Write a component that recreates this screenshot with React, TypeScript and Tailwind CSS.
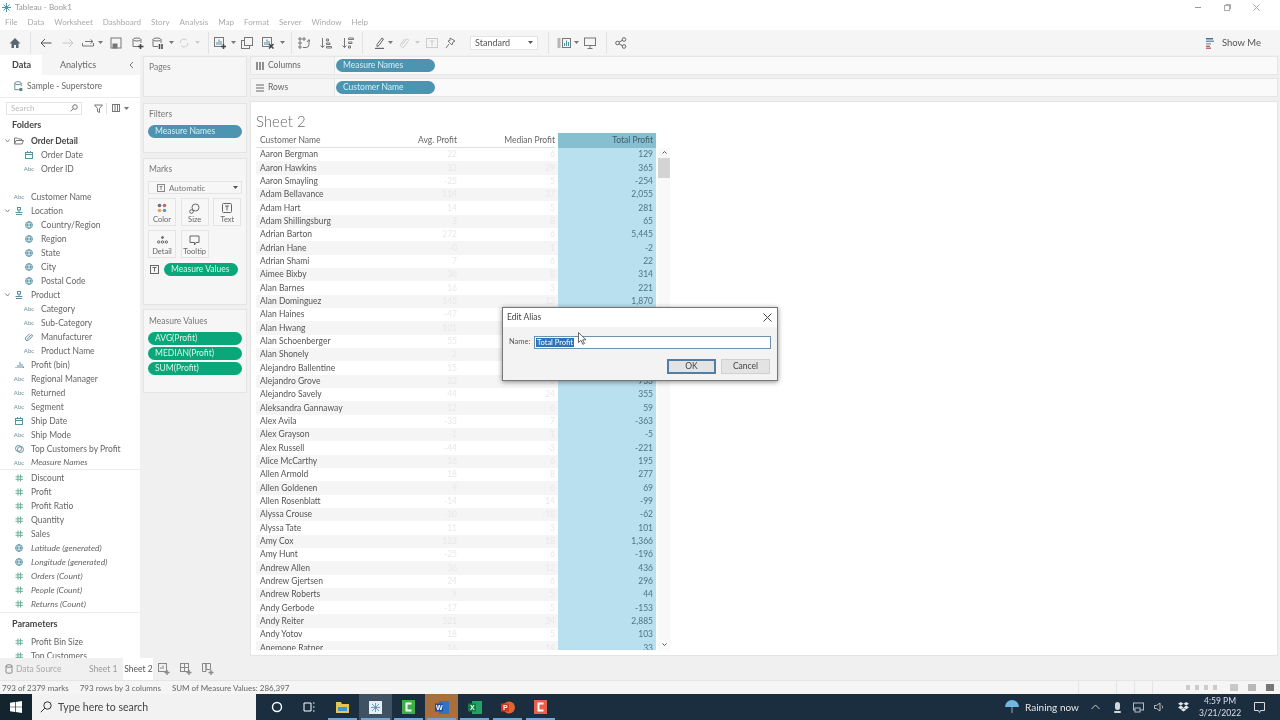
import type { ReactNode } from 'react'

const rows: [string, string, string, string][] = [
  ['Aaron Bergman', '22', '6', '129'],
  ['Aaron Hawkins', '33', '29', '365'],
  ['Aaron Smayling', '-25', '5', '-254'],
  ['Adam Bellavance', '114', '37', '2,055'],
  ['Adam Hart', '14', '5', '281'],
  ['Adam Shillingsburg', '3', '8', '65'],
  ['Adrian Barton', '272', '6', '5,445'],
  ['Adrian Hane', '-0', '1', '-2'],
  ['Adrian Shami', '7', '6', '22'],
  ['Aimee Bixby', '36', '8', '314'],
  ['Alan Barnes', '16', '3', '221'],
  ['Alan Dominguez', '145', '12', '1,870'],
  ['Alan Haines', '-47', '4', '-141'],
  ['Alan Hwang', '101', '8', '441'],
  ['Alan Schoenberger', '55', '9', '1,223'],
  ['Alan Shonely', '2', '4', '18'],
  ['Alejandro Ballentine', '15', '7', '150'],
  ['Alejandro Grove', '32', '6', '733'],
  ['Alejandro Savely', '44', '24', '355'],
  ['Aleksandra Gannaway', '12', '6', '59'],
  ['Alex Avila', '-33', '7', '-363'],
  ['Alex Grayson', '-1', '1', '-5'],
  ['Alex Russell', '-44', '-3', '-221'],
  ['Alice McCarthy', '16', '6', '195'],
  ['Allen Armold', '18', '8', '277'],
  ['Allen Goldenen', '9', '6', '69'],
  ['Allen Rosenblatt', '-14', '14', '-99'],
  ['Alyssa Crouse', '-10', '-18', '-62'],
  ['Alyssa Tate', '11', '3', '101'],
  ['Amy Cox', '122', '18', '1,366'],
  ['Amy Hunt', '-25', '6', '-196'],
  ['Andrew Allen', '36', '12', '436'],
  ['Andrew Gjertsen', '24', '6', '296'],
  ['Andrew Roberts', '9', '5', '44'],
  ['Andy Gerbode', '-17', '5', '-153'],
  ['Andy Reiter', '321', '34', '2,885'],
  ['Andy Yotov', '18', '5', '103'],
  ['Anemone Ratner', '16', '14', '33'],
]

type Kind = 'abc' | 'date' | 'geo' | 'hash' | 'hier' | 'folder' | 'clip' | 'bin' | 'set' | 'ratio'

const fields: { name: string; kind: Kind; sub?: boolean; italic?: boolean; bold?: boolean; open?: boolean; line?: boolean }[] = [
  { name: 'Order Detail', kind: 'folder', bold: true, open: true },
  { name: 'Order Date', kind: 'date', sub: true },
  { name: 'Order ID', kind: 'abc', sub: true },
  { name: '', kind: 'abc' },
  { name: 'Customer Name', kind: 'abc' },
  { name: 'Location', kind: 'hier', open: true },
  { name: 'Country/Region', kind: 'geo', sub: true },
  { name: 'Region', kind: 'geo', sub: true },
  { name: 'State', kind: 'geo', sub: true },
  { name: 'City', kind: 'geo', sub: true },
  { name: 'Postal Code', kind: 'geo', sub: true },
  { name: 'Product', kind: 'hier', open: true },
  { name: 'Category', kind: 'abc', sub: true },
  { name: 'Sub-Category', kind: 'abc', sub: true },
  { name: 'Manufacturer', kind: 'clip', sub: true },
  { name: 'Product Name', kind: 'abc', sub: true },
  { name: 'Profit (bin)', kind: 'bin' },
  { name: 'Regional Manager', kind: 'abc' },
  { name: 'Returned', kind: 'abc' },
  { name: 'Segment', kind: 'abc' },
  { name: 'Ship Date', kind: 'date' },
  { name: 'Ship Mode', kind: 'abc' },
  { name: 'Top Customers by Profit', kind: 'set' },
  { name: 'Measure Names', kind: 'abc', italic: true, line: true },
  { name: 'Discount', kind: 'hash' },
  { name: 'Profit', kind: 'hash' },
  { name: 'Profit Ratio', kind: 'ratio' },
  { name: 'Quantity', kind: 'hash' },
  { name: 'Sales', kind: 'hash' },
  { name: 'Latitude (generated)', kind: 'geo', italic: true },
  { name: 'Longitude (generated)', kind: 'geo', italic: true },
  { name: 'Orders (Count)', kind: 'hash', italic: true },
  { name: 'People (Count)', kind: 'hash', italic: true },
  { name: 'Returns (Count)', kind: 'hash', italic: true },
]

function Ico({ children, className = '', w = 12, h = 12 }: { children: ReactNode; className?: string; w?: number; h?: number }) {
  return (
    <svg width={w} height={h} viewBox={`0 0 ${w} ${h}`} fill="none" stroke="currentColor" strokeWidth="1" className={`shrink-0 ${className}`}>
      {children}
    </svg>
  )
}

function Caret({ className = '' }: { className?: string }) {
  return (
    <svg width="5" height="3" viewBox="0 0 5 3" className={`shrink-0 ${className}`} fill="currentColor">
      <path d="M0 0h5L2.5 3z" />
    </svg>
  )
}

function Sep({ className = '' }: { className?: string }) {
  return <div className={`w-px h-[22px] bg-[#e2e2e2] shrink-0 ${className}`} />
}

function FieldIcon({ kind }: { kind: Kind }) {
  if (kind === 'abc') return <span className="text-[6px] leading-none text-[#6f8f99] w-[14px] text-center">Abc</span>
  if (kind === 'hash' || kind === 'ratio')
    return (
      <span className="w-[14px] flex justify-center text-[#6fae9c]">
        <Ico w={8} h={8}>
          <path d="M3 0.5v7M5.5 0.5v7M0.5 2.8h7.5M0.5 5.3h7.5" />
        </Ico>
      </span>
    )
  if (kind === 'geo')
    return (
      <span className="w-[14px] flex justify-center text-[#5c97a8]">
        <Ico w={8} h={8}>
          <circle cx="4" cy="4" r="3.4" />
          <path d="M0.6 4h6.8M4 0.6c-2 2-2 4.8 0 6.8M4 0.6c2 2 2 4.8 0 6.8" />
        </Ico>
      </span>
    )
  if (kind === 'date')
    return (
      <span className="w-[14px] flex justify-center text-[#5c8fa0]">
        <Ico w={8} h={8}>
          <rect x="0.5" y="1.5" width="7" height="6" />
          <path d="M0.5 3.5h7M2.5 0v2M5.5 0v2" />
        </Ico>
      </span>
    )
  if (kind === 'hier')
    return (
      <span className="w-[14px] flex justify-center text-[#5c8fa0]">
        <Ico w={8} h={8}>
          <rect x="2.5" y="0.5" width="3" height="2.5" />
          <path d="M4 3v2M1 7.5h6M0.5 5.5h7" />
        </Ico>
      </span>
    )
  if (kind === 'folder')
    return (
      <span className="w-[14px] flex justify-center text-[#777]">
        <Ico w={10} h={8}>
          <path d="M0.5 7V1h3l1 1h3v1.5M0.5 7l1.5-3.5h7.5L8 7z" />
        </Ico>
      </span>
    )
  if (kind === 'clip')
    return (
      <span className="w-[14px] flex justify-center text-[#5c8fa0]">
        <Ico w={8} h={8}>
          <path d="M2 6.5l4-4.5a1 1 0 0 1 1.3 1.5L3 7.5a2 2 0 0 1-2.6-2.5L4.5.8" />
        </Ico>
      </span>
    )
  if (kind === 'bin')
    return (
      <span className="w-[14px] flex justify-center text-[#5c8fa0]">
        <Ico w={9} h={6}>
          <path d="M1 6V5M3 6V3M5 6V0M7 6V2M8.5 6V4.5" />
        </Ico>
      </span>
    )
  return (
    <span className="w-[14px] flex justify-center text-[#5c8fa0]">
      <Ico w={9} h={8}>
        <circle cx="3.5" cy="3.5" r="3" />
        <circle cx="5.5" cy="4.5" r="3" />
      </Ico>
    </span>
  )
}

function Pill({ label, green, className = '' }: { label: string; green?: boolean; className?: string }) {
  return (
    <div className={`h-[13px] rounded-full flex items-center pl-[7px] text-[8.5px] leading-none shrink-0 ${green ? 'bg-[#0aa77a] text-[#d8f5ea]' : 'bg-[#4c94b0] text-[#d6eff6]'} ${className}`}>
      {label}
    </div>
  )
}

function MarkBtn({ label, children }: { label: string; children: ReactNode }) {
  return (
    <div className="w-[28px] h-[28px] border border-[#e4e4e4] bg-[#f7f7f7] flex flex-col items-center justify-between pt-[3px] pb-[2px] text-[#666]">
      <div className="h-[12px] flex items-center">{children}</div>
      <span className="text-[7.5px] leading-none text-[#666]">{label}</span>
    </div>
  )
}

function Toolbar() {
  return (
    <div className="h-[25px] bg-[#f5f5f5] flex items-center text-[#777] shrink-0">
      <Ico className="ml-[9px] text-[#5c6670]"><path d="M6 1L0.5 6.5H2.5V11H5V8H7V11H9.5V6.5H11.5z" fill="currentColor" stroke="none" /></Ico>
      <Sep className="ml-[9px]" />
      <Ico className="ml-[9px] text-[#555]"><path d="M11.5 6H1M5 2L1 6l4 4" /></Ico>
      <Ico className="ml-[10px] text-[#c4c4c4]"><path d="M0.5 6H11M7 2l4 4-4 4" /></Ico>
      <Ico className="ml-[8px]"><path d="M0.5 6v3h11V6M3 4.5h8M8.5 2.5L11 4.5 8.5 6.5" /></Ico>
      <Caret className="ml-[4px]" />
      <Ico className="ml-[7px]"><rect x="1" y="1" width="10" height="10" /><rect x="3" y="7" width="4" height="4" fill="currentColor" /></Ico>
      <Ico className="ml-[10px]"><path d="M1 2.5v7h5M9 2.5V6" /><ellipse cx="5" cy="2.5" rx="4" ry="1.5" /><path d="M8.5 7v5M6 9.5h5.5" strokeWidth="1.6" stroke="#444" /></Ico>
      <Ico className="ml-[8px]"><path d="M1 2.5v7h5M9 2.5V6" /><ellipse cx="5" cy="2.5" rx="4" ry="1.5" /><path d="M7.5 7v5M10 7v5" strokeWidth="1.5" stroke="#444" /></Ico>
      <Caret className="ml-[5px]" />
      <Ico className="ml-[4px] text-[#ccc]"><path d="M2 6a4 4 0 0 1 7-2.6M10 6a4 4 0 0 1-7 2.6" /></Ico>
      <Caret className="ml-[5px] text-[#ccc]" />
      <Sep className="ml-[8px]" />
      <Ico className="ml-[5px]"><rect x="0.5" y="0.5" width="9" height="9" /><path d="M3 8V5M5 8V2.5M7 8V4" stroke="#4a90a8" /><path d="M9.5 7v5M7 9.5h5" strokeWidth="1.5" stroke="#444" /></Ico>
      <Caret className="ml-[5px]" />
      <Ico className="ml-[5px]"><rect x="0.5" y="3.5" width="8" height="8" /><rect x="3.5" y="0.5" width="8" height="8" fill="#f5f5f5" /></Ico>
      <Ico className="ml-[9px]"><rect x="0.5" y="0.5" width="9" height="9" /><path d="M3 8V5M5 8V2.5M7 8V4" stroke="#4a90a8" /><path d="M7 7l4.5 4.5M11.5 7L7 11.5" strokeWidth="1.5" stroke="#444" /></Ico>
      <Caret className="ml-[6px]" />
      <Sep className="ml-[6px]" />
      <Ico className="ml-[6px]"><path d="M1 1h2v2H1zM5 1h2v2H5zM1 5h2v2H1zM1 9h2v2H1zM5 10.5h3a3 3 0 0 0 3-3V3M9 5l2-2.500 1 2" /></Ico>
      <Ico className="ml-[10px]"><path d="M2.500 1v9.500M0.500 8.500l2 2 2-2M6.500 2h2v2h-2zM6.500 6h3.500v1.500h-3.500zM6.500 9.500h5v1.500h-5z" /></Ico>
      <Ico className="ml-[10px]"><path d="M2.500 1v9.500M0.500 8.500l2 2 2-2M6.500 1h5v1.500h-5zM6.500 5h3.500v1.500h-3.500zM6.500 9h2v2h-2z" /></Ico>
      <Sep className="ml-[8px]" />
      <Ico className="ml-[11px] text-[#666]"><path d="M3 7.500L8 1l1.500 1-4.500 6.500-2 1z" /><path d="M1 11.500h9" strokeWidth="1.400" /></Ico>
      <Caret className="ml-[2px]" />
      <Ico className="ml-[6px] text-[#ccc]"><path d="M3 8l4.500-6a1.500 1.500 0 0 1 2 1.500L5 10a2.500 2.500 0 0 1-3.500-2.500l4-5.500" /></Ico>
      <Caret className="ml-[4px] text-[#ccc]" />
      <Ico className="ml-[6px] text-[#ccc]"><rect x="0.5" y="1.500" width="11" height="9" /><path d="M4 4h4M6 4v5" /></Ico>
      <Ico className="ml-[7px]"><path d="M5 1l5 3-2 1-1 3-4-4 2-.5zM4 7l-3 4" /></Ico>
      <div className="ml-[13px] w-[68px] h-[14px] border border-[#e4e4e4] bg-white flex items-center justify-between pl-[4px] pr-[4px] shrink-0">
        <span className="text-[9px] leading-none text-[#555]">Standard</span>
        <Caret className="text-[#555]" />
      </div>
      <Sep className="ml-[10px]" />
      <Ico w={14} className="ml-[8px]"><path d="M0.500 2h3M0.500 4h3M0.500 6h3M0.500 8h3M0.500 10h3" /><rect x="5.500" y="1.500" width="8" height="9" /><path d="M7.500 9V6M9.500 9V3.500M11.500 9V5" stroke="#4a90a8" /></Ico>
      <Caret className="ml-[3px]" />
      <Ico className="ml-[5px]"><rect x="0.500" y="1" width="11" height="7.500" /><path d="M6 8.500v2.500M3.500 11.500h5" /></Ico>
      <Sep className="ml-[10px]" />
      <Ico className="ml-[8px] text-[#666]"><circle cx="2.500" cy="6" r="1.800" /><circle cx="9" cy="2.500" r="1.800" /><circle cx="9" cy="9.500" r="1.800" /><path d="M4 5.200l3.500-2M4 6.800l3.500 2" /></Ico>
      <div className="ml-auto mr-[19px] flex items-center gap-[8px]">
        <svg width="8" height="12" viewBox="0 0 8 12" className="shrink-0">
          <path d="M0 1h7v1.500H0z" fill="#4a6f8a" />
          <path d="M0 3.500h8V5H0z" fill="#6b98b5" />
          <path d="M0 6h5v1.500H0z" fill="#9aa9b5" />
          <path d="M0 8.500h4V10H0z" fill="#c46a78" />
          <path d="M0 10.500h5V12H0z" fill="#c46a78" />
        </svg>
        <span className="text-[9.500px] leading-none text-[#555]">Show Me</span>
      </div>
    </div>
  )
}

function DataPane() {
  return (
    <div className="w-[140px] bg-white flex flex-col shrink-0 overflow-hidden">
      <div className="h-[20px] flex items-center bg-[#f5f5f5] shrink-0">
        <div className="w-[42px] h-full bg-white flex items-center pl-[12px] text-[9px] font-bold text-[#444]">Data</div>
        <span className="ml-[18px] text-[9px] text-[#666]">Analytics</span>
        <span className="ml-auto mr-[6px] text-[#777]">
          <Ico w={5} h={8}><path d="M4 1L1 4l3 3" /></Ico>
        </span>
      </div>
      <div className="h-[23px] flex items-center pl-[14px] gap-[4px] border-b border-[#ececec] shrink-0">
        <span className="text-[#6b8f9c]">
          <Ico w={9} h={11}><ellipse cx="4" cy="2.200" rx="3.200" ry="1.500" /><path d="M0.800 2.200v6.500h4M7.200 2.200v3" /><circle cx="6.800" cy="8.500" r="1.800" fill="#4f8a7a" stroke="none" /></Ico>
        </span>
        <span className="text-[8.500px] leading-none text-[#666]">Sample - Superstore</span>
      </div>
      <div className="h-[16px] mt-[2px] flex items-center pl-[6px] shrink-0 text-[#777]">
        <div className="w-[76px] h-[13px] border border-[#e4e4e4] flex items-center justify-between pl-[4px] pr-[3px]">
          <span className="text-[8px] leading-none text-[#bbb]">Search</span>
          <Ico w={8} h={8}><circle cx="5" cy="3" r="2.300" /><path d="M3.300 4.700L0.800 7.300" /></Ico>
        </div>
        <Ico w={9} h={9} className="ml-[12px]"><path d="M0.500 1h8L5.500 4.500v4l-2-1V4.500z" /></Ico>
        <div className="w-px h-[11px] bg-[#e0e0e0] ml-[3px]" />
        <Ico w={8} h={8} className="ml-[5px]"><rect x="0.500" y="0.500" width="7" height="7" /><path d="M3 0.500v7M5.500 0.500v7" /></Ico>
        <Caret className="ml-[4px]" />
      </div>
      <div className="h-[17px] flex items-center pl-[12px] text-[9px] font-bold text-[#444] shrink-0">Folders</div>
      <div className="flex flex-1 min-h-0">
        <div className="flex-1 min-w-0 flex flex-col pt-[1px]">
          {fields.map((f, i) => (
            <div key={i} className={`h-[14px] shrink-0 flex items-center ${f.sub ? 'pl-[22px]' : 'pl-[12px]'} relative ${f.line ? 'mb-[1px] border-b border-[#ececec]' : ''}`}>
              {f.open && (
                <span className="absolute left-[5px] top-[5px] text-[#888]">
                  <Ico w={5} h={4}><path d="M0.500 0.500L2.500 3l2-2.500" /></Ico>
                </span>
              )}
              {f.name && <FieldIcon kind={f.kind} />}
              <span className={`ml-[5px] text-[8.500px] leading-none whitespace-nowrap ${f.italic ? 'italic' : ''} ${f.bold ? 'font-bold text-[#444]' : 'text-[#666]'}`}>{f.name}</span>
            </div>
          ))}
          <div className="h-[18px] mt-[1px] border-t border-[#ececec] flex items-end pl-[12px] text-[9px] font-bold text-[#444] w-[140px] shrink-0">Parameters</div>
          <div className="h-[5px] shrink-0" />
          <div className="h-[14px] shrink-0 flex items-center pl-[12px]">
            <FieldIcon kind="hash" />
            <span className="ml-[5px] text-[8.500px] leading-none text-[#666]">Profit Bin Size</span>
          </div>
          <div className="h-[14px] shrink-0 flex items-center pl-[12px]">
            <FieldIcon kind="hash" />
            <span className="ml-[5px] text-[8.500px] leading-none text-[#666]">Top Customers</span>
          </div>
        </div>
      </div>
    </div>
  )
}

function Card({ title, className = '', children }: { title: string; className?: string; children?: ReactNode }) {
  return (
    <div className={`bg-[#f6f6f6] border border-[#e4e4e4] shrink-0 ${className}`}>
      <div className="h-[21px] flex items-center pl-[5px] text-[8.500px] leading-none text-[#777]">{title}</div>
      {children}
    </div>
  )
}

function Cards() {
  return (
    <div className="w-[104px] ml-[3px] pt-[1px] flex flex-col shrink-0">
      <Card title="Pages" className="h-[41px]" />
      <Card title="Filters" className="h-[50px] mt-[6px]">
        <Pill label="Measure Names" className="mx-[4px]" />
      </Card>
      <Card title="Marks" className="h-[147px] mt-[5px]">
        <div className="mx-[4px] h-[13px] border border-[#e4e4e4] bg-[#f7f7f7] flex items-center pl-[8px] pr-[3px] mt-[1px]">
          <span className="text-[#888]">
            <Ico w={8} h={8}><rect x="0.500" y="0.500" width="7" height="7" /><path d="M2.500 2.500h3M4 2.500v3.500" /></Ico>
          </span>
          <span className="ml-[4px] text-[8px] leading-none text-[#777]">Automatic</span>
          <Caret className="ml-auto text-[#555]" />
        </div>
        <div className="mx-[4px] mt-[4px] grid grid-cols-3 gap-x-[4px] gap-y-[4px]">
          <MarkBtn label="Color">
            <svg width="10" height="10" viewBox="0 0 10 10">
              <circle cx="2.500" cy="2.500" r="1.800" fill="#6a6f78" />
              <circle cx="7.500" cy="2.500" r="1.800" fill="#d0606a" />
              <circle cx="2.500" cy="7.500" r="1.800" fill="#e0a060" />
              <circle cx="7.500" cy="7.500" r="1.800" fill="#5a9ab8" />
            </svg>
          </MarkBtn>
          <MarkBtn label="Size">
            <Ico w={11} h={11}><circle cx="6.500" cy="4.500" r="3.500" /><circle cx="2.500" cy="8.500" r="1.800" /></Ico>
          </MarkBtn>
          <MarkBtn label="Text">
            <Ico w={10} h={10}><rect x="0.500" y="0.500" width="9" height="9" rx="1" /><path d="M3 3h4M5 3v4.500" /></Ico>
          </MarkBtn>
          <MarkBtn label="Detail">
            <Ico w={11} h={8}><circle cx="5.500" cy="1.500" r="1" fill="currentColor" /><circle cx="1.700" cy="6" r="1.200" /><circle cx="5.500" cy="6" r="1.200" /><circle cx="9.300" cy="6" r="1.200" /></Ico>
          </MarkBtn>
          <MarkBtn label="Tooltip">
            <Ico w={11} h={11}><path d="M1 1h9v6.500H7L5.500 10V7.500H1z" /></Ico>
          </MarkBtn>
        </div>
        <div className="flex items-center mt-[5px] ml-[6px]">
          <span className="text-[#666]">
            <Ico w={9} h={9}><rect x="0.500" y="0.500" width="8" height="8" /><path d="M2.500 2.500h4M4.500 2.500v4" /></Ico>
          </span>
          <Pill label="Measure Values" green className="ml-[5px] w-[74px] pl-[7px]" />
        </div>
      </Card>
      <Card title="Measure Values" className="h-[84px] mt-[4px] pt-[1px]">
        <div className="mx-[4px] flex flex-col gap-[2px]">
          <Pill label="AVG(Profit)" green />
          <Pill label="MEDIAN(Profit)" green />
          <Pill label="SUM(Profit)" green />
        </div>
      </Card>
    </div>
  )
}

function Shelf({ label, pill, icon, className = '' }: { label: string; pill: string; icon: ReactNode; className?: string }) {
  return (
    <div className={`flex h-[19px] shrink-0 ${className}`}>
      <div className="w-[85px] flex items-center pl-[5px] gap-[4px] bg-[#f5f5f5] border border-[#e6e6e6]">
        <span className="text-[#666]">{icon}</span>
        <span className="text-[8.500px] leading-none text-[#666]">{label}</span>
      </div>
      <div className="flex-1 flex items-center bg-[#fafafa] border-y border-r border-[#e6e6e6] pl-[1px]">
        <Pill label={pill} className="w-[99px]" />
      </div>
    </div>
  )
}

function SheetTable() {
  return (
    <div className="flex-1 min-h-0 bg-white border border-[#e4e4e4] flex flex-col pl-[5px] overflow-hidden">
      <div className="h-[31px] flex items-end shrink-0 text-[15px] leading-[24px] text-[#6a6a6a] font-light">Sheet 2</div>
      <div className="flex items-start min-h-0 flex-1">
        <div className="w-[400px] shrink-0">
          <div className="h-[15px] flex text-[8.500px] text-[#666] items-center">
            <div className="w-[120px] pl-[4px] h-full flex items-center border-b border-[#e0e0e0]">Customer Name</div>
            <div className="w-[81px] text-right h-full flex items-center justify-end border-b border-[#e0e0e0]">Avg. Profit</div>
            <div className="w-[98px] text-right h-full flex items-center justify-end border-b border-[#e0e0e0]">Median Profit</div>
            <div className="w-[3px]" />
            <div className="w-[98px] h-full bg-[#86bfcf] flex items-center justify-end pr-[3px] text-[#3e5f6b]">Total Profit</div>
          </div>
          <div className="h-[502px] overflow-hidden">
            {rows.map((r, i) => (
              <div key={r[0]} className={`h-[13.33px] flex items-center text-[8.500px] leading-none ${i % 2 ? 'bg-[#f5f5f5]' : 'bg-white'}`}>
                <div className="w-[120px] pl-[4px] whitespace-nowrap text-[#555]">{r[0]}</div>
                <div className="w-[81px] text-right text-[#e8e8e8]">{r[1]}</div>
                <div className="w-[98px] text-right text-[#e8e8e8]">{r[2]}</div>
                <div className="w-[3px]" />
                <div className="w-[98px] h-full bg-[#b9e0ee] flex items-center justify-end pr-[3px] text-[#4f7486]">{r[3]}</div>
              </div>
            ))}
          </div>
        </div>
        <div className="w-[12px] h-[502px] mt-[15px] ml-[2px] bg-[#f9f9f9] flex flex-col items-center pt-[3px] pb-[4px] text-[#555] shrink-0">
          <Ico w={5} h={3}><path d="M0.500 2.500L2.500 0.500l2 2" /></Ico>
          <div className="w-full h-[20px] bg-[#d4d4d4] mt-[4px]" />
          <Ico w={5} h={3} className="mt-auto"><path d="M0.500 0.500L2.500 2.500l2-2" /></Ico>
        </div>
      </div>
    </div>
  )
}

function BottomTabs() {
  return (
    <div className="h-[22px] bg-[#f0f0f0] flex items-center shrink-0 text-[#888]">
      <span className="ml-[5px]">
        <Ico w={8} h={10}><ellipse cx="4" cy="2" rx="3" ry="1.300" /><path d="M1 2v6.500c1 1 5 1 6 0V2" /></Ico>
      </span>
      <span className="ml-[3px] w-[60px] text-[8.500px] leading-none text-[#aaa]">Data Source</span>
      <span className="ml-[13px] text-[8.500px] leading-none text-[#999]">Sheet 1</span>
      <div className="ml-[6px] w-[30px] h-full bg-white flex items-center justify-center text-[8.500px] text-[#555]">Sheet 2</div>
      <Ico className="ml-[5px]"><rect x="0.500" y="0.500" width="8" height="8" /><path d="M3 6V4M5 6V2.500" /><path d="M9 7v5M6.500 9.500h5" strokeWidth="1.400" /></Ico>
      <Ico className="ml-[10px]"><rect x="0.500" y="0.500" width="8" height="8" /><path d="M0.500 4.500h8M4.500 0.500v8" /><path d="M9 7v5M6.500 9.500h5" strokeWidth="1.400" /></Ico>
      <Ico className="ml-[10px]"><path d="M0.500 0.500h3.500v8H0.500zM4 0.500h4.500v6H4z" /><path d="M9 7v5M6.500 9.500h5" strokeWidth="1.400" /></Ico>
    </div>
  )
}

function StatusBar() {
  return (
    <div className="h-[14px] bg-[#f5f5f5] flex items-center shrink-0 text-[8px] leading-none text-[#666] border-t border-[#e4e4e4]">
      <span className="ml-[2px]">793 of 2379 marks</span>
      <span className="ml-[11px]">793 rows by 3 columns</span>
      <span className="ml-[11px]">SUM of Measure Values: 286,397</span>
      <div className="ml-auto mr-[6px] flex items-center gap-[5px] text-[#bbb]">
        <span className="w-px h-[14px] bg-[#e4e4e4] mr-[32px]" />
        <span className="w-px h-[14px] bg-[#e4e4e4] mr-[12px]" />
        <span className="w-px h-[14px] bg-[#e4e4e4] mr-[12px]" />
        <span className="w-px h-[14px] bg-[#e4e4e4] mr-[28px]" />
        <span className="w-[4px] h-[5px] bg-[#ccc]" />
        <span className="w-[4px] h-[5px] bg-[#ccc]" />
        <span className="w-[4px] h-[5px] bg-[#ccc]" />
        <span className="w-[4px] h-[5px] bg-[#ccc] mr-[8px]" />
        <span className="w-[8px] h-[7px] bg-[#c8c8c8]" />
        <span className="w-[8px] h-[7px] bg-[#b8b8b8] ml-[5px]" />
        <span className="w-[8px] h-[7px] bg-[#777] ml-[5px]" />
      </div>
    </div>
  )
}

function TaskIcon({ active, word, lined = true, children }: { active?: boolean; word?: boolean; lined?: boolean; children: ReactNode }) {
  return (
    <div className={`w-[33px] h-full flex items-center justify-center relative shrink-0 ${active ? 'bg-[#3f5264]' : ''} ${word ? 'bg-[#a8703c]' : ''}`}>
      {children}
      {lined && <span className="absolute bottom-0 left-[2px] right-[2px] h-[2px] bg-[#6fa8d8]" />}
    </div>
  )
}

function Taskbar() {
  return (
    <div className="h-[26px] bg-[#1a2e3f] flex items-center shrink-0 text-white">
      <div className="w-[32px] h-full flex items-center justify-center bg-[#14242f]">
        <svg width="12" height="12" viewBox="0 0 12 12" fill="#fff">
          <path d="M0 1.700l5-.7v4.700H0zM5.700 0.900L12 0v5.700H5.700zM0 6.300h5V11l-5-.7zM5.700 6.300H12V12l-6.300-.9z" />
        </svg>
      </div>
      <div className="w-[224px] h-full bg-[#f2f2f2] flex items-center pl-[8px] text-[#333]">
        <Ico w={12} h={12}><circle cx="7.500" cy="4.500" r="3.700" /><path d="M4.800 7.200L0.800 11.200" /></Ico>
        <span className="ml-[6px] text-[10.500px] leading-none text-[#444]">Type here to search</span>
      </div>
      <div className="ml-[5px] w-[32px] flex justify-center">
        <Ico><circle cx="6" cy="6" r="4.500" strokeWidth="1.400" /></Ico>
      </div>
      <div className="w-[32px] flex justify-center">
        <Ico><path d="M1 2h7v8H1zM10 2h1.500M10 6h1.500M10 10h1.500" /></Ico>
      </div>
      <div className="ml-[1px] flex h-full items-center">
        <TaskIcon>
          <svg width="13" height="11" viewBox="0 0 13 11"><path d="M0 0h5l1 2h7v9H0z" fill="#e8c35a" /><path d="M2 5h9v4H2z" fill="#3d9ad0" /></svg>
        </TaskIcon>
        <TaskIcon active>
          <svg width="13" height="13" viewBox="0 0 13 13" stroke="#4f8db0"><rect width="13" height="13" fill="#e6eef3" stroke="none" /><path d="M6.500 2v9M2 6.500h9M3 3l7 7M10 3l-7 7" strokeWidth="0.800" /></svg>
        </TaskIcon>
        <TaskIcon>
          <svg width="13" height="14" viewBox="0 0 13 14"><rect width="13" height="14" fill="#3fae49" /><path d="M9.500 3.500h-5v7h5" stroke="#fff" strokeWidth="2" fill="none" /></svg>
        </TaskIcon>
        <TaskIcon word>
          <svg width="14" height="13" viewBox="0 0 14 13"><rect x="4" width="10" height="13" fill="#2f73c4" /><rect y="2.500" width="8" height="8" fill="#1e4f9c" /><text x="1" y="9" fontSize="7" fontWeight="bold" fill="#fff" fontFamily="Liberation Sans, sans-serif">W</text></svg>
        </TaskIcon>
        <TaskIcon>
          <svg width="14" height="13" viewBox="0 0 14 13"><rect x="4" width="10" height="13" fill="#22a366" /><rect y="2.500" width="8" height="8" fill="#107c41" /><text x="2" y="9" fontSize="7" fontWeight="bold" fill="#fff" fontFamily="Liberation Sans, sans-serif">X</text></svg>
        </TaskIcon>
        <TaskIcon>
          <svg width="14" height="13" viewBox="0 0 14 13"><circle cx="8" cy="6.500" r="6" fill="#e0652f" /><rect y="2.500" width="8" height="8" fill="#c43e1c" /><text x="2" y="9" fontSize="7" fontWeight="bold" fill="#fff" fontFamily="Liberation Sans, sans-serif">P</text></svg>
        </TaskIcon>
        <TaskIcon>
          <svg width="13" height="14" viewBox="0 0 13 14"><rect width="13" height="14" fill="#e8604c" /><path d="M9.500 3.500h-5v7h5" stroke="#fff" strokeWidth="2" fill="none" /></svg>
        </TaskIcon>
      </div>
      <div className="ml-auto flex items-center h-full">
        <svg width="16" height="16" viewBox="0 0 16 16" className="mr-[5px]">
          <path d="M1 8a7 7 0 0 1 14 0z" fill="#6fb8e0" />
          <path d="M8 8v6" stroke="#9ab" fill="none" />
        </svg>
        <span className="text-[10px] leading-none text-[#e6e6e6] w-[52px] whitespace-nowrap">Raining now</span>
        <span className="ml-[14px] text-[#ccc]">
          <Ico w={9} h={6}><path d="M0.500 5L4.500 1l4 4" /></Ico>
        </span>
        <svg width="7" height="11" viewBox="0 0 7 11" fill="#cfd6dc" className="ml-[14px]">
          <rect x="1" width="5" height="8" rx="2.500" />
          <rect x="0" y="9" width="7" height="2" rx="1" />
        </svg>
        <span className="ml-[12px] text-[#bbb]">
          <Ico w={11} h={11}><rect x="0.500" y="1" width="10" height="7" /><rect x="2" y="6" width="5" height="4" fill="#1a2e3f" /></Ico>
        </span>
        <span className="ml-[10px] text-[#bbb]">
          <Ico w={11} h={10}><path d="M0.500 3.500h2L6 1v8L2.500 6.500h-2zM8 3.500c.8.800.8 2.200 0 3" /></Ico>
        </span>
        <svg width="11" height="10" viewBox="0 0 11 10" fill="#e6e6e6" className="ml-[13px]">
          <path d="M2.800 0L0 1.800l2.800 1.800 2.700-1.800zM8.200 0L5.500 1.800l2.700 1.800L11 1.800zM0 5.400l2.800 1.800 2.700-1.800-2.700-1.800zM8.200 3.600L5.500 5.400l2.700 1.800L11 5.400zM2.800 7.800l2.700 1.800 2.700-1.800-2.700-1.700z" />
        </svg>
        <div className="ml-[9px] w-[44px] flex flex-col items-center gap-[3px] text-[8.500px] leading-none text-[#dde]">
          <span>4:59 PM</span>
          <span>3/21/2022</span>
        </div>
        <span className="ml-[12px] mr-[15px] text-[#ddd]">
          <Ico w={11} h={11}><path d="M0.500 0.500h10v8h-4l-1 2-1-2h-4z" /></Ico>
        </span>
      </div>
    </div>
  )
}

function AliasDialog() {
  return (
    <div className="absolute left-[502px] top-[307px] w-[276px] h-[74px] bg-[#f3f3f3] border border-[#777] shadow-[0_1px_5px_rgba(0,0,0,0.45)] flex flex-col">
      <div className="h-[19px] bg-white flex items-center justify-between pl-[4px] pr-[5px] shrink-0">
        <span className="text-[8.500px] leading-none text-[#444]">Edit Alias</span>
        <span className="text-[#444]">
          <Ico w={9} h={9}><path d="M0.500 0.500l8 8M8.500 0.500l-8 8" /></Ico>
        </span>
      </div>
      <div className="flex items-center h-[14px] mt-[8px] pl-[6px] shrink-0">
        <span className="text-[7.500px] leading-none text-[#555] w-[25px]">Name:</span>
        <div className="w-[237px] h-[13px] bg-white border border-[#6f93ad] flex items-center pl-[1px]">
          <span className="h-[9px] bg-[#2f73b8] text-white text-[7.500px] leading-[9px] px-[1px]">Total Profit</span>
        </div>
      </div>
      <div className="flex justify-end gap-[5px] mt-[10px] pr-[7px]">
        <div className="w-[49px] h-[15px] border-2 border-[#4f7fa8] bg-[#e3e3e3] flex items-center justify-center text-[8.500px] leading-none text-[#444]">OK</div>
        <div className="w-[49px] h-[15px] border border-[#d0d0d0] bg-[#e3e3e3] flex items-center justify-center text-[8.500px] leading-none text-[#444]">Cancel</div>
      </div>
    </div>
  )
}

export default function App() {
  return (
    <div className="relative w-[1280px] h-[720px] overflow-hidden flex flex-col bg-white blur-[0.3px] font-['Lato','Open_Sans',sans-serif]">
      {/* Window title + menu */}
      <div className="h-[14px] bg-white flex items-center pl-[2px] shrink-0">
        <svg width="9" height="9" viewBox="0 0 9 9" stroke="#4f8fb0" strokeWidth="1" className="shrink-0">
          <path d="M4.500 0v9M0 4.500h9M1.500 1.500l6 6M7.500 1.500l-6 6" />
        </svg>
        <span className="ml-[4px] text-[8px] leading-none text-[#999]">Tableau - Book1</span>
        <div className="ml-auto flex items-center mr-[20px] text-[#aaa]">
          <span className="w-[6px] h-px bg-[#999]" />
          <span className="ml-[23px]">
            <Ico w={7} h={7}><rect x="0.500" y="1.500" width="5" height="5" /><path d="M2 1.500V0.500h4.500V5H5.500" /></Ico>
          </span>
          <span className="ml-[22px]">
            <Ico w={7} h={7}><path d="M0.500 0.500l6 6M6.500 0.500l-6 6" /></Ico>
          </span>
        </div>
      </div>
      <div className="h-[16px] bg-white flex items-center pl-[5px] gap-[10px] shrink-0 text-[8px] leading-none text-[#aaa]">
        {['File', 'Data', 'Worksheet', 'Dashboard', 'Story', 'Analysis', 'Map', 'Format', 'Server', 'Window', 'Help'].map((m) => (
          <span key={m}>{m}</span>
        ))}
      </div>
      <Toolbar />

      {/* Workspace */}
      <div className="flex-1 min-h-0 flex bg-[#f0f0f0]">
        <DataPane />
        <Cards />
        <div className="flex-1 min-w-0 flex flex-col pl-[3px] pr-[2px] pt-[1px] pb-[2px]">
          <Shelf label="Columns" pill="Measure Names" icon={<Ico w={8} h={8}><path d="M1 0v8M4 0v8M7 0v8" strokeWidth="1.400" /></Ico>} />
          <Shelf label="Rows" pill="Customer Name" className="mt-[3px]" icon={<Ico w={8} h={8}><path d="M0 1h8M0 4h8M0 7h8" /></Ico>} />
          <div className="h-[4px] shrink-0" />
          <SheetTable />
        </div>
      </div>

      <BottomTabs />
      <StatusBar />
      <Taskbar />

      <AliasDialog />

      {/* Mouse pointer */}
      <svg width="9" height="13" viewBox="0 0 9 13" className="absolute left-[578px] top-[332px]">
        <path d="M0.500 0.500v10l2.500-2.200 1.800 4 1.600-.7-1.800-3.800H8z" fill="#fff" stroke="#444" strokeWidth="0.800" />
      </svg>
    </div>
  )
}
